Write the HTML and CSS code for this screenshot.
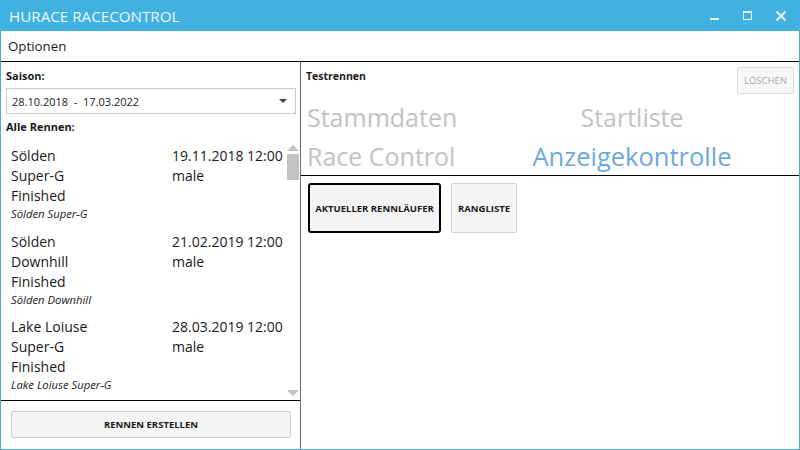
FILE: index.html
```html
<!DOCTYPE html>
<html>
<head>
<meta charset="utf-8">
<link rel="stylesheet" href="styles.css">
</head>
<body>
<div class="window">
  <header class="titlebar">
    <div class="title">HURACE RACECONTROL</div>
    <div class="controls">
      <svg class="ctl" width="12" height="12" viewBox="0 0 12 12"><rect x="1" y="8" width="9" height="2" fill="#e6f4fb"/></svg>
      <svg class="ctl" width="12" height="12" viewBox="0 0 12 12"><rect x="1.5" y="1.5" width="8" height="8" fill="none" stroke="#e6f4fb" stroke-width="1"/><rect x="1" y="1" width="9" height="2" fill="#e6f4fb"/></svg>
      <svg class="ctl" width="12" height="12" viewBox="0 0 12 12"><path d="M1.5 1.5 L10.5 10.5 M10.5 1.5 L1.5 10.5" stroke="#e6f4fb" stroke-width="2"/></svg>
    </div>
  </header>
  <nav class="menubar"><span>Optionen</span></nav>
  <main class="content">
    <aside class="left">
      <div class="label">Saison:</div>
      <div class="combo"><span>28.10.2018&nbsp; - &nbsp;17.03.2022</span><span class="caret"></span></div>
      <div class="label label2">Alle Rennen:</div>
      <div class="listwrap">
        <div class="list">
          <div class="item">
            <div class="row"><span class="c1">Sölden</span><span>19.11.2018 12:00</span></div>
            <div class="row"><span class="c1">Super-G</span><span>male</span></div>
            <div class="row"><span class="c1">Finished</span></div>
            <div class="desc">Sölden Super-G</div>
          </div>
          <div class="item">
            <div class="row"><span class="c1">Sölden</span><span>21.02.2019 12:00</span></div>
            <div class="row"><span class="c1">Downhill</span><span>male</span></div>
            <div class="row"><span class="c1">Finished</span></div>
            <div class="desc">Sölden Downhill</div>
          </div>
          <div class="item">
            <div class="row"><span class="c1">Lake Loiuse</span><span>28.03.2019 12:00</span></div>
            <div class="row"><span class="c1">Super-G</span><span>male</span></div>
            <div class="row"><span class="c1">Finished</span></div>
            <div class="desc">Lake Loiuse Super-G</div>
          </div>
        </div>
        <div class="scrollbar">
          <span class="arrow up"></span>
          <span class="thumb"></span>
          <span class="spacer"></span>
          <span class="arrow down"></span>
        </div>
      </div>
      <div class="leftfoot">
        <button class="btn wide">RENNEN ERSTELLEN</button>
      </div>
    </aside>
    <section class="right">
      <div class="rhead">
        <div class="rtitle">Testrennen</div>
        <button class="btn del" disabled>LÖSCHEN</button>
      </div>
      <div class="tabs">
        <span class="tab">Stammdaten</span>
        <span class="tab c">Startliste</span>
        <span class="tab">Race Control</span>
        <span class="tab c active">Anzeigekontrolle</span>
      </div>
      <div class="actions">
        <button class="btn big focused">AKTUELLER RENNLÄUFER</button>
        <button class="btn big">RANGLISTE</button>
      </div>
    </section>
  </main>
</div>
</body>
</html>
```
FILE: styles.css
```css
* { box-sizing: border-box; }
html, body { margin: 0; padding: 0; }
body {
  width: 800px; height: 450px; overflow: hidden;
  font-family: "Open Sans", "Noto Sans", sans-serif;
  color: #1a1a1a;
  background: #fff;
}
.window {
  width: 800px; height: 450px;
  border: 1px solid #41b1e1; border-top: none;
  display: flex; flex-direction: column;
}
.titlebar {
  height: 31px; flex: none;
  background: #41b1e1;
  display: flex; align-items: center; justify-content: space-between;
  margin: 0 -1px;
  padding: 0 8px 0 9px;
}
.title { color: #eef8fd; font-size: 15.2px; }
.controls { display: flex; gap: 21px; align-items: center; padding-right: 5px; }
.ctl { display: block; }
.menubar {
  height: 31px; flex: none;
  border-bottom: 1px solid #000;
  display: flex; align-items: center;
  padding-left: 7px;
  font-size: 13.3px;
}
.content { flex: 1; display: flex; min-height: 0; }
.left {
  width: 300px; flex: none;
  border-right: 1px solid #6e6e6e;
  display: flex; flex-direction: column;
}
.label { font-size: 11px; font-weight: 700; padding: 6px 0 0 5px; height: 26px; }
.label2 { padding-top: 5px; height: 24px; }
.combo {
  margin: 0 4px 0 5px; height: 26px;
  border: 1px solid #c9c9c9;
  display: flex; align-items: center; justify-content: space-between;
  padding: 0 8px 0 5px;
  font-size: 11px; color: #222;
}
.caret { width: 0; height: 0; border-left: 4px solid transparent; border-right: 4px solid transparent; border-top: 4px solid #444; }
.listwrap { flex: 1; display: flex; min-height: 0; border-bottom: 1px solid #000; }
.list { flex: 1; overflow: hidden; padding-top: 8px; }
.item { padding: 0 0 10px 10px; height: 85.5px; }
.row { display: flex; font-size: 14px; line-height: 20px; height: 20px; }
.c1 { width: 161px; }
.desc { font-style: italic; font-size: 11.3px; line-height: 16px; }
.scrollbar { width: 14px; flex: none; display: flex; flex-direction: column; align-items: center; padding: 7px 0 4px; }
.arrow { width: 0; height: 0; border-left: 6px solid transparent; border-right: 6px solid transparent; }
.arrow.up { border-bottom: 6px solid #c2c2c2; }
.arrow.down { border-top: 6px solid #c2c2c2; }
.thumb { width: 12px; height: 26px; background: #c2c2c2; margin-top: 3px; }
.spacer { flex: 1; }
.leftfoot { height: 48px; flex: none; padding: 10px 9px 0 10px; }
.btn {
  font-family: inherit; font-weight: 700; font-size: 9.5px; color: #1a1a1a;
  background: #f4f4f4; border: 1px solid #cfcfcf; border-radius: 2px;
  padding: 0; cursor: default;
}
.wide { width: 100%; height: 27px; }
.right { flex: 1; display: flex; flex-direction: column; }
.rhead { display: flex; justify-content: space-between; align-items: flex-start; padding: 5px 5px 0 5px; height: 33px; }
.rtitle { font-size: 10.5px; font-weight: 700; padding-top: 2px; }
.del { width: 57px; height: 27px; font-weight: 400; font-size: 9.5px; color: #a8a8a8; background: #f8f8f8; border-color: #dcdcdc; }
.tabs {
  display: grid; grid-template-columns: 192px 266px;
  padding: 3px 0 0 6px;
  border-bottom: 1px solid #000;
  height: 81px;
}
.tab { font-size: 25px; line-height: 39px; color: #c3c3c3; white-space: nowrap; }
.tab.c { text-align: center; }
.tab.active { color: #6da9dc; font-size: 25.5px; }
.actions { display: flex; gap: 10px; padding: 7px 0 0 7px; }
.big { height: 50px; border-radius: 3px; }
.big:first-child { width: 133px; }
.big:last-child { width: 66px; }
.focused { border: 2px solid #000; }
```
